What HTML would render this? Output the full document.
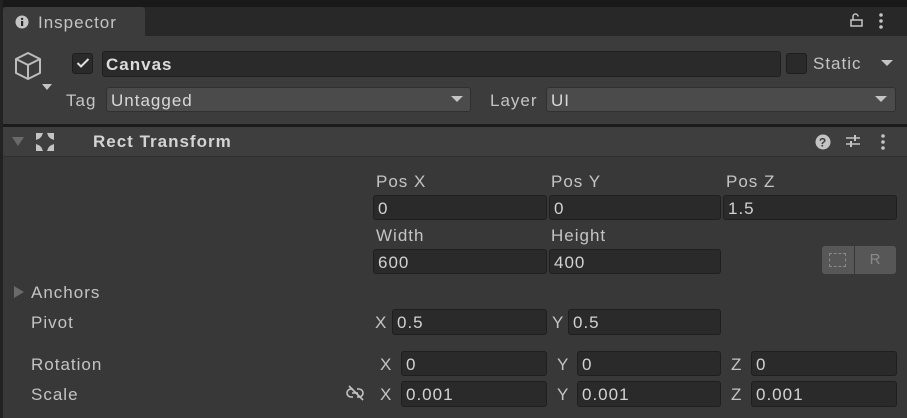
<!DOCTYPE html>
<html><head><meta charset="utf-8"><style>
*{box-sizing:border-box;margin:0;padding:0}
body{width:907px;height:418px;background:#383838;font-family:"Liberation Sans","DejaVu Sans",sans-serif;font-size:17px;letter-spacing:1px;color:#c4c4c4;position:relative;overflow:hidden}
.a{position:absolute}
.f{position:absolute;background:#2a2a2a;border:1px solid #1f1f1f;border-radius:3px;height:25px;padding-left:4px;line-height:25px;color:#d2d2d2}
.l{position:absolute;line-height:22px;color:#c4c4c4}
.dd{position:absolute;background:#4b4b4b;border:1px solid #303030;border-radius:3px;height:25px;line-height:25px;padding-left:4px;color:#d8d8d8}
.tri{position:absolute;width:0;height:0;border-style:solid;border-color:#c4c4c4 transparent transparent transparent}
</style></head><body>
<div class="a" style="left:0;top:0;width:907px;height:7px;background:#191919"></div>
<div class="a" style="left:0;top:7px;width:907px;height:29px;background:#282828"></div>
<div class="a" style="left:0;top:0;width:3px;height:418px;background:#222"></div>
<div class="a" style="left:3px;top:7px;width:142px;height:29px;background:#3c3c3c;border-radius:3px 3px 0 0"></div>
<svg class="a" style="left:15px;top:15px" width="14" height="14"><circle cx="7" cy="7" r="6.5" fill="#c4c4c4"/><rect x="6" y="6" width="2.2" height="5" fill="#282828"/><circle cx="7.1" cy="3.9" r="1.2" fill="#282828"/></svg>
<div class="l" style="left:38px;top:12px">Inspector</div>
<svg class="a" style="left:848px;top:12px" width="16" height="16"><path d="M3 8H14V14H3Z" fill="none" stroke="#c4c4c4" stroke-width="1.5"/><path d="M5 8V4.5A2.5 2.5 0 0 1 10 4.5" fill="none" stroke="#c4c4c4" stroke-width="1.5"/></svg>
<svg class="a" style="left:878px;top:12px" width="6" height="18"><circle cx="3" cy="3" r="1.8" fill="#c4c4c4"/><circle cx="3" cy="9" r="1.8" fill="#c4c4c4"/><circle cx="3" cy="15" r="1.8" fill="#c4c4c4"/></svg>
<div class="a" style="left:3px;top:36px;width:904px;height:88px;background:#3c3c3c"></div>
<svg class="a" style="left:12px;top:50px" width="34" height="36"><path d="M16 3L28 9V23L16 29L4 23V9Z M4 9L16 15L28 9 M16 15V29" fill="none" stroke="#bdbdbd" stroke-width="2" stroke-linejoin="round"/></svg>
<div class="tri" style="left:42px;top:84px;border-width:6px 5px 0 5px"></div>
<div class="a" style="left:72px;top:53px;width:21px;height:21px;background:#2a2a2a;border:1px solid #1e1e1e;border-radius:3px"></div>
<svg class="a" style="left:76px;top:57px" width="14" height="12"><path d="M1.5 6L5 9.5L12.5 2" fill="none" stroke="#e0e0e0" stroke-width="2"/></svg>
<div class="f" style="left:102px;top:51px;width:679px;height:26px;font-weight:bold;color:#dcdcdc;padding-left:3px">Canvas</div>
<div class="a" style="left:786px;top:53px;width:21px;height:21px;background:#2a2a2a;border:1px solid #1e1e1e;border-radius:3px"></div>
<div class="l" style="left:813px;top:53px">Static</div>
<div class="tri" style="left:881px;top:60px;border-width:6px 6px 0 6px"></div>
<div class="l" style="left:66px;top:90px">Tag</div>
<div class="dd" style="left:106px;top:87px;width:365px">Untagged</div>
<div class="tri" style="left:451px;top:96px;border-width:6px 6px 0 6px"></div>
<div class="l" style="left:490px;top:90px">Layer</div>
<div class="dd" style="left:546px;top:87px;width:350px">UI</div>
<div class="tri" style="left:875px;top:96px;border-width:6px 6px 0 6px"></div>
<div class="a" style="left:3px;top:124px;width:904px;height:3px;background:#1b1b1b"></div>
<div class="a" style="left:3px;top:127px;width:904px;height:30px;background:#3e3e3e;border-bottom:1px solid #2f2f2f"></div>
<div class="tri" style="left:12px;top:137px;border-width:9px 6px 0 6px;border-top-color:#6a6a6a"></div>
<svg class="a" style="left:35px;top:132px" width="20" height="20"><g fill="#c4c4c4"><path d="M1 1H8L6.5 4.5L4.5 6.5L1 8Z"/><path d="M19 1H12L13.5 4.5L15.5 6.5L19 8Z"/><path d="M1 19H8L6.5 15.5L4.5 13.5L1 12Z"/><path d="M19 19H12L13.5 15.5L15.5 13.5L19 12Z"/></g></svg>
<div class="l" style="left:93px;top:131px;font-weight:bold;color:#d4d4d4">Rect Transform</div>
<svg class="a" style="left:815px;top:134px" width="16" height="16"><circle cx="8" cy="8" r="7.5" fill="#c4c4c4"/><text x="8" y="12.5" text-anchor="middle" font-size="12" font-weight="bold" fill="#3e3e3e" font-family="Liberation Sans">?</text></svg>
<svg class="a" style="left:845px;top:133px" width="16" height="16"><path d="M1 5H15M1 11H15" stroke="#c4c4c4" stroke-width="1.6"/><path d="M10 2V8M6 8V14" stroke="#c4c4c4" stroke-width="2"/></svg>
<svg class="a" style="left:880px;top:133px" width="6" height="18"><circle cx="3" cy="3" r="1.8" fill="#c4c4c4"/><circle cx="3" cy="9" r="1.8" fill="#c4c4c4"/><circle cx="3" cy="15" r="1.8" fill="#c4c4c4"/></svg>
<div class="l" style="left:376px;top:171px">Pos X</div>
<div class="l" style="left:551px;top:171px">Pos Y</div>
<div class="l" style="left:726px;top:171px">Pos Z</div>
<div class="f" style="left:373px;top:195px;width:174px">0</div>
<div class="f" style="left:549px;top:195px;width:172px">0</div>
<div class="f" style="left:723px;top:195px;width:174px">1.5</div>
<div class="l" style="left:376px;top:225px">Width</div>
<div class="l" style="left:551px;top:225px">Height</div>
<div class="f" style="left:373px;top:249px;width:174px">600</div>
<div class="f" style="left:549px;top:249px;width:172px">400</div>
<div class="a" style="left:822px;top:246px;width:32px;height:28px;background:#575757;border-radius:3px 0 0 3px"></div>
<div class="a" style="left:829px;top:253px;width:17px;height:14px;border:1.5px dashed #8a8a8a"></div>
<div class="a" style="left:855px;top:246px;width:41px;height:28px;background:#575757;border-radius:0 3px 3px 0;color:#8a8a8a;text-align:center;line-height:28px;font-size:15px">R</div>
<div class="a" style="left:14px;top:286px;width:0;height:0;border-style:solid;border-width:6px 0 6px 10px;border-color:transparent transparent transparent #6a6a6a"></div>
<div class="l" style="left:31px;top:282px">Anchors</div>
<div class="l" style="left:31px;top:312px">Pivot</div>
<div class="l" style="left:375px;top:312px">X</div>
<div class="f" style="left:392px;top:309px;width:155px;height:26px">0.5</div>
<div class="l" style="left:552px;top:312px">Y</div>
<div class="f" style="left:568px;top:309px;width:153px;height:26px">0.5</div>
<div class="l" style="left:31px;top:354px">Rotation</div>
<div class="l" style="left:380px;top:354px">X</div>
<div class="f" style="left:401px;top:351px;width:146px">0</div>
<div class="l" style="left:557px;top:354px">Y</div>
<div class="f" style="left:577px;top:351px;width:144px">0</div>
<div class="l" style="left:731px;top:354px">Z</div>
<div class="f" style="left:751px;top:351px;width:146px">0</div>
<div class="l" style="left:31px;top:384px">Scale</div>
<svg class="a" style="left:346px;top:385px" width="20" height="16"><path d="M7 4H5A4 4 0 0 0 5 12H7M11 4H13A4 4 0 0 1 13 12H11M6 8H12" fill="none" stroke="#c4c4c4" stroke-width="1.6"/><path d="M3 1L17 15" stroke="#c4c4c4" stroke-width="1.6"/></svg>
<div class="l" style="left:380px;top:384px">X</div>
<div class="f" style="left:401px;top:381px;width:146px;height:26px">0.001</div>
<div class="l" style="left:557px;top:384px">Y</div>
<div class="f" style="left:577px;top:381px;width:144px;height:26px">0.001</div>
<div class="l" style="left:731px;top:384px">Z</div>
<div class="f" style="left:751px;top:381px;width:146px;height:26px">0.001</div>
</body></html>
